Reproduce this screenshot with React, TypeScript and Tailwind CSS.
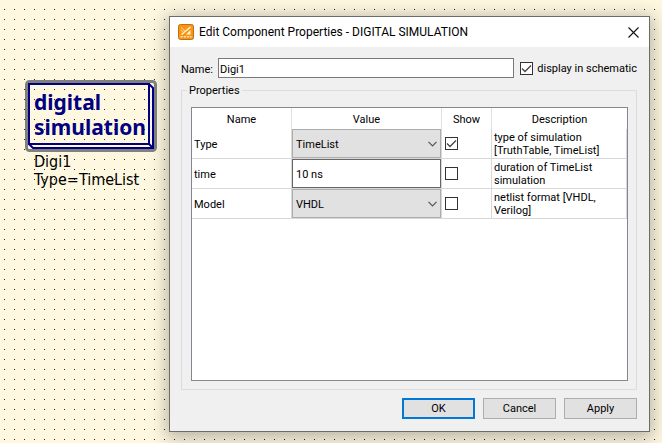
import { useState } from "react";

type Row = {
  name: string;
  value: string;
  options?: string[];
  show: boolean;
  description: string;
};

const rows: Row[] = [
  {
    name: "Type",
    value: "TimeList",
    options: ["TimeList", "TruthTable"],
    show: true,
    description: "type of simulation [TruthTable, TimeList]",
  },
  { name: "time", value: "10 ns", show: false, description: "duration of TimeList simulation" },
  {
    name: "Model",
    value: "VHDL",
    options: ["VHDL", "Verilog"],
    show: false,
    description: "netlist format [VHDL, Verilog]",
  },
];

function CheckBox({ id, label, initial }: { id?: string; label?: string; initial: boolean }) {
  const [on, setOn] = useState(initial);
  return (
    <span className="relative block size-[13px] shrink-0">
      <input
        id={id}
        type="checkbox"
        aria-label={label}
        checked={on}
        onChange={(e) => setOn(e.target.checked)}
        className="block size-[13px] appearance-none border border-[#333333] bg-white"
      />
      {on && (
        <svg viewBox="0 0 13 13" className="pointer-events-none absolute inset-0 size-[13px]">
          <path d="M2 6.500 5 9.500 11 3.500" fill="none" stroke="#444" strokeWidth="1.3" />
        </svg>
      )}
    </span>
  );
}

function AppIcon() {
  return (
    <svg viewBox="0 0 16 16" className="size-4 shrink-0">
      <rect x="0.5" y="0.5" width="15" height="15" rx="2" fill="#fb9410" stroke="#b8741c" />
      <path d="M3.5 10.5 12.5 3" stroke="#fff3dc" strokeWidth="1.6" />
      <path d="M3 3.5 7 7M3 6 5.5 8.3" stroke="#ffd79a" strokeWidth="1" />
      <path d="M8 10.5 12.5 6v4.5z" fill="#fff3dc" />
      <path d="M2.5 12.8h2.2M5.8 12.8H8M9 12.8h1.8M11.8 12.8h1.7" stroke="#ffe3b5" strokeWidth="1.6" />
    </svg>
  );
}

function SimulationBlock() {
  return (
    <section className="mt-20 w-[132px] shrink-0 text-black">
      <div className="relative h-[73px] px-[9px] pt-[10px]">
        <svg viewBox="0 0 132 72" className="absolute top-0 left-0 h-[72px] w-[132px]" fill="none">
          <rect x="1.5" y="1.5" width="129" height="69" rx="3" stroke="#808080" strokeWidth="3" />
          <g stroke="#000080" strokeWidth="2">
            <path d="M4 4H124V64H4Z" />
            <path d="M124 4 128 8V68H8L4 64M124 64l4 4" />
          </g>
        </svg>
        <h1 className="relative font-['Noto_Sans',sans-serif] text-[21px] leading-[25px] font-bold whitespace-nowrap text-[#000080]">
          digital
          <br />
          simulation
        </h1>
      </div>
      <p className="px-[9px] font-['DejaVu_Sans_Condensed',sans-serif] text-[16px] leading-[18px] whitespace-nowrap">
        Digi1
        <br />
        Type=TimeList
      </p>
    </section>
  );
}

function PropertiesTable() {
  return (
    <table className="w-full table-fixed border-separate border-spacing-0">
      <thead>
        <tr className="h-[21px]">
          <th className="w-[100px] border-r border-[#e0e0e0] p-0 pt-[2px] font-normal">Name</th>
          <th className="w-[150px] border-r border-[#e0e0e0] p-0 pt-[2px] font-normal">Value</th>
          <th className="w-[50px] border-r border-[#e0e0e0] p-0 pt-[2px] font-normal">Show</th>
          <th className="p-0 pt-[2px] font-normal">Description</th>
        </tr>
      </thead>
      <tbody>
        {rows.map((row) => (
          <tr key={row.name} className="h-[30px]">
            <td className="border-r border-b border-[#d8d8d8] p-0 pt-[2px] pl-[2px]">{row.name}</td>
            <td className="border-r border-b border-[#d8d8d8] p-0">
              {row.options ? (
                <div className="relative">
                  <select
                    aria-label={row.name}
                    defaultValue={row.value}
                    className="block h-[29px] w-full appearance-none border border-[#adadad] bg-[#e1e1e1] pt-[2px] pl-[3px]"
                  >
                    {row.options.map((option) => (
                      <option key={option}>{option}</option>
                    ))}
                  </select>
                  <svg
                    viewBox="0 0 9 6"
                    className="pointer-events-none absolute top-[12px] right-[4px] h-[6px] w-[9px]"
                  >
                    <path d="M0.500 0.800 4.500 4.800 8.500 0.800" fill="none" stroke="#555" strokeWidth="1.2" />
                  </svg>
                </div>
              ) : (
                <input
                  aria-label={row.name}
                  defaultValue={row.value}
                  className="block h-[29px] w-full border border-[#666666] bg-white pt-[2px] pl-[3px]"
                />
              )}
            </td>
            <td className="border-r border-b border-[#d8d8d8] p-0 pl-[3px]">
              <CheckBox label={`Show ${row.name}`} initial={row.show} />
            </td>
            <td className="border-r border-b border-[#d8d8d8] p-0 pl-[2px] leading-[13px]">
              {row.description}
            </td>
          </tr>
        ))}
      </tbody>
    </table>
  );
}

function PropertiesDialog() {
  return (
    <div
      role="dialog"
      aria-labelledby="dialog-title"
      className="mt-4 mr-3 mb-[11px] ml-3 flex flex-1 flex-col border border-[#6b6b68] bg-[#f0f0f0] font-[Roboto,sans-serif] text-[11px] leading-[13px] text-black shadow-[0_3px_16px_3px_rgba(0,0,0,0.28)]"
    >
      <header className="flex h-[30px] items-center bg-white pr-[10px] pl-2">
        <AppIcon />
        <h2 id="dialog-title" className="ml-[5px] flex-1 text-[12px] leading-4">
          Edit Component Properties - DIGITAL SIMULATION
        </h2>
        <button type="button" aria-label="Close">
          <svg viewBox="0 0 11 11" className="size-[11px]">
            <path d="M0.500 0.500 10.500 10.500M10.500 0.500 0.500 10.500" stroke="#111" strokeWidth="1.1" />
          </svg>
        </button>
      </header>

      <div className="flex flex-1 flex-col pt-[11px] pr-3 pb-3 pl-[11px]">
        <div className="flex h-5 items-center">
          <label htmlFor="name" className="w-[37px] pt-[2px] whitespace-nowrap">
            Name:
          </label>
          <input
            id="name"
            defaultValue="Digi1"
            className="h-5 min-w-0 flex-1 border border-[#7a7a7a] bg-white pt-[2px] pl-px"
          />
          <div className="ml-[6px] flex items-center gap-1">
            <CheckBox id="display" initial />
            <label htmlFor="display" className="whitespace-nowrap">
              display in schematic
            </label>
          </div>
        </div>

        <fieldset className="mt-[6px] flex flex-1 flex-col border border-[#dcdcdc] pr-2 pb-2 pl-[9px]">
          <legend className="-ml-[4px] px-[2px]">Properties</legend>
          <div className="mt-[10px] min-h-[274px] flex-1 border border-[#828790] bg-white">
            <PropertiesTable />
          </div>
        </fieldset>

        <div className="mt-2 flex justify-end gap-2">
          <button type="button" className="h-[21px] w-[73px] border-2 border-[#0078d7] bg-[#e1e1e1]">
            OK
          </button>
          <button type="button" className="h-[21px] w-[73px] border border-[#adadad] bg-[#e1e1e1]">
            Cancel
          </button>
          <button type="button" className="h-[21px] w-[73px] border border-[#adadad] bg-[#e1e1e1]">
            Apply
          </button>
        </div>
      </div>
    </div>
  );
}

export default function App() {
  return (
    <main className="flex min-h-screen bg-[#fff8e1] bg-[conic-gradient(from_270deg_at_1px_1px,#222_90deg,transparent_0)] bg-[length:10px_10px] bg-[position:4px_9px] pl-[25px]">
      <SimulationBlock />
      <PropertiesDialog />
    </main>
  );
}
